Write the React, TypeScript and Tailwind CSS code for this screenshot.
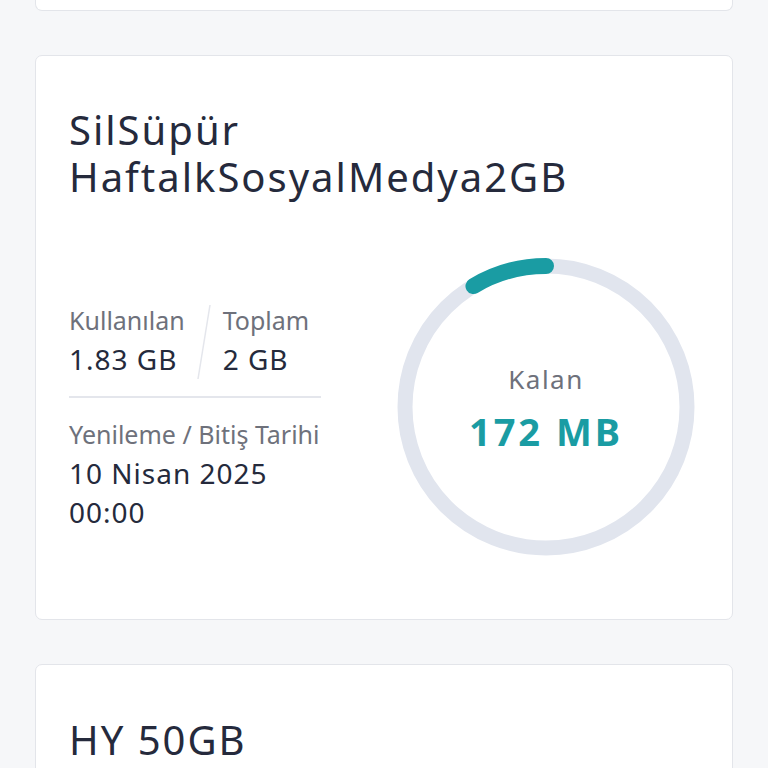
import React from 'react';

const R = 141;
const C = 2 * Math.PI * R;

function Ring({ used, total }: { used: number; total: number }) {
  const remaining = 1 - used / total;
  return (
    <div className="relative w-[298px] h-[298px] shrink-0">
      <svg width="298" height="298" viewBox="0 0 298 298" className="absolute inset-0">
        <circle cx="149" cy="149" r={R} fill="none" stroke="#e1e5ee" strokeWidth="15" />
        <circle
          cx="149"
          cy="149"
          r={R}
          fill="none"
          stroke="#1a9ca3"
          strokeWidth="16"
          strokeLinecap="round"
          strokeDasharray={`${C * remaining} ${C}`}
          transform="rotate(-90 149 149) scale(1 -1) translate(0 -298)"
        />
      </svg>
      <div className="absolute inset-0 flex flex-col items-center justify-center pt-[4px]">
        <div className="text-[26px] leading-[34px] tracking-[1.5px] text-[#6e717b]">Kalan</div>
        <div className="mt-[10px] text-[38px] leading-[50px] font-bold tracking-[3px] text-[#1a9ca3]">172 MB</div>
      </div>
    </div>
  );
}

export default function App() {
  return (
    <div className="min-h-screen bg-[#f6f7f9] px-[35px] font-['Noto_Sans',sans-serif] text-[#252a3c]">
      <div className="h-[11px] bg-white border border-t-0 border-[#e3e5ea] rounded-b-[7px]" />

      <div className="mt-[44px] bg-white border border-[#e3e5ea] rounded-[7px] px-[33px] pt-[50px] pb-[63px]">
        <h2 className="text-[40px] leading-[47px] tracking-[2px] text-[#252a3c]">
          <div>SilSüpür</div>
          <div>HaftalkSosyalMedya2GB</div>
        </h2>

        <div className="mt-[58px] flex items-center justify-between">
          <div className="w-[252px] leading-[39px] mt-[18px]">
            <div className="flex items-start">
              <div>
                <div className="text-[25px] text-[#6e717b]">Kullanılan</div>
                <div className="text-[28px] tracking-[1px]">1.83 GB</div>
              </div>
              <svg width="20" height="76" viewBox="0 0 20 76" className="ml-[10px] mr-[8px] mt-[3px] shrink-0">
                <line x1="15" y1="1" x2="3" y2="75" stroke="#e4e6ec" strokeWidth="1.5" />
              </svg>
              <div>
                <div className="text-[25px] text-[#6e717b]">Toplam</div>
                <div className="text-[28px] tracking-[1px]">2 GB</div>
              </div>
            </div>
            <div className="h-[2px] bg-[#e4e6ec] mt-[16px] mb-[17px]" />
            <div className="text-[25px] whitespace-nowrap text-[#6e717b]">Yenileme / Bitiş Tarihi</div>
            <div className="text-[28px] tracking-[1px]">10 Nisan 2025</div>
            <div className="text-[28px] tracking-[1px]">00:00</div>
          </div>
          <div className="mr-[4px]">
            <Ring used={1.828} total={2} />
          </div>
        </div>
      </div>

      <div className="mt-[44px] bg-white border border-[#e3e5ea] rounded-[7px] px-[33px] pt-[51px] pb-[40px]">
        <h2 className="text-[40px] leading-[47px] tracking-[2px] text-[#252a3c]">HY 50GB</h2>
      </div>
    </div>
  );
}
